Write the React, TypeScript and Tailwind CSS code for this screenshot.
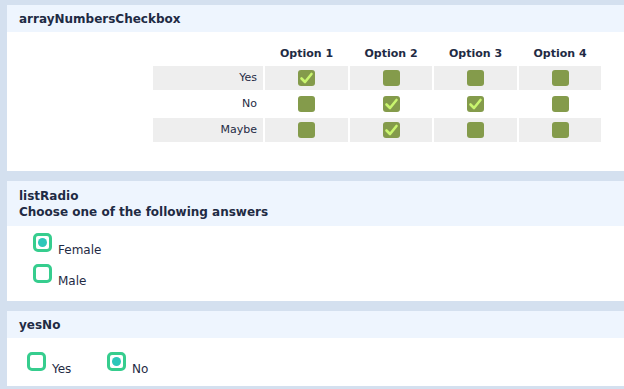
import React from 'react';

const font = { fontFamily: '"DejaVu Sans", Verdana, sans-serif' };

const options = ['Option 1', 'Option 2', 'Option 3', 'Option 4'];
const rows = [
  { label: 'Yes', checked: [true, false, false, false] },
  { label: 'No', checked: [false, true, true, false] },
  { label: 'Maybe', checked: [false, true, false, false] },
];

function Checkbox({ checked }: { checked: boolean }) {
  return (
    <span className="inline-flex w-[17px] h-[16px] rounded-[3px] bg-[#849b4b] items-center justify-center align-middle">
      {checked && (
        <svg width="17" height="16" viewBox="0 0 17 16">
          <path d="M3.5 8.5 L7 12 L13.5 4" fill="none" stroke="#c9f56f" strokeWidth="2.6" strokeLinecap="round" strokeLinejoin="round" />
        </svg>
      )}
    </span>
  );
}

function Radio({ checked, label, className = '' }: { checked: boolean; label: string; className?: string }) {
  return (
    <div className={`flex items-start ${className}`}>
      <span className="w-[19px] h-[19px] rounded-[5px] border-[3px] border-[#36cd8e] flex items-center justify-center shrink-0">
        {checked && <span className="w-[9px] h-[9px] rounded-full bg-[#2cc7b9]" />}
      </span>
      <span className="ml-[6px] mt-[8px] leading-[19px] text-[12px] text-[#1f2b44]">{label}</span>
    </div>
  );
}

function Header({ children, className = '' }: { children: React.ReactNode; className?: string }) {
  return (
    <div className={`bg-[#eef5fe] px-[12px] font-bold text-[12px] text-[#1f2b44] ${className}`}>
      {children}
    </div>
  );
}

export default function App() {
  return (
    <div className="min-h-screen bg-[#d4e0ef] pt-[5px] pl-[7px] flex flex-col gap-[10px]" style={font}>
      {/* array question */}
      <div className="bg-white">
        <Header className="h-[27px] flex items-center">arrayNumbersCheckbox</Header>
        <div className="h-[139px] pt-[8px] pl-[144px]">
          <table className="border-separate border-spacing-[2px] text-[11px] text-[#1f2b44]">
            <thead>
              <tr className="h-[22px]">
                <th className="w-[110px]" />
                {options.map((o, j) => (
                  <th key={o} className={`${j % 2 === 0 ? 'w-[83px]' : 'w-[82px]'} pt-[3px] font-bold text-center`}>
                    {o}
                  </th>
                ))}
              </tr>
            </thead>
            <tbody>
              {rows.map((r, i) => (
                <tr key={r.label} className="h-[24px]">
                  <td className={`text-right pr-[6px] ${i % 2 === 0 ? 'bg-[#eeeeee]' : ''}`}>{r.label}</td>
                  {r.checked.map((c, j) => (
                    <td key={j} className={`text-center ${i % 2 === 0 ? 'bg-[#eeeeee]' : ''}`}>
                      <Checkbox checked={c} />
                    </td>
                  ))}
                </tr>
              ))}
            </tbody>
          </table>
        </div>
      </div>

      {/* list radio */}
      <div className="bg-white">
        <Header className="h-[45px] pt-[7px] leading-[16px]">
          <div>listRadio</div>
          <div>Choose one of the following answers</div>
        </Header>
        <div className="h-[75px] pt-[7px] pl-[26px] flex flex-col gap-[4px]">
          <Radio checked label="Female" />
          <Radio checked={false} label="Male" />
        </div>
      </div>

      {/* yes / no */}
      <div className="bg-white">
        <Header className="h-[27px] flex items-center">yesNo</Header>
        <div className="h-[48px] pt-[14px] pl-[20px] flex">
          <Radio checked={false} label="Yes" className="w-[80px]" />
          <Radio checked label="No" />
        </div>
      </div>
    </div>
  );
}
